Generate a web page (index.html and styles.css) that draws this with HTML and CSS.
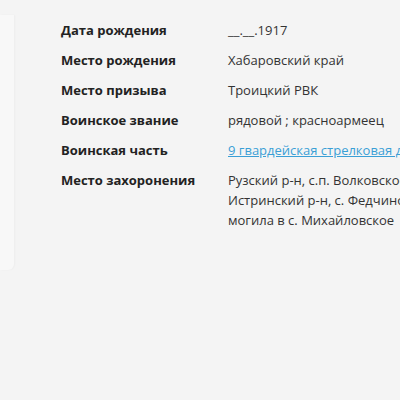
FILE: index.html
```
<!DOCTYPE html>
<html lang="ru">
<head>
<meta charset="UTF-8">
<title>Карточка</title>
<link rel="stylesheet" href="styles.css">
</head>
<body>
<div class="side"></div>
<div class="info">
  <div class="row"><div class="label">Дата рождения</div><div class="value">__.__.1917</div></div>
  <div class="row"><div class="label">Место рождения</div><div class="value">Хабаровский край</div></div>
  <div class="row"><div class="label">Место призыва</div><div class="value">Троицкий РВК</div></div>
  <div class="row"><div class="label">Воинское звание</div><div class="value">рядовой ; красноармеец</div></div>
  <div class="row"><div class="label">Воинская часть</div><div class="value"><a href="#">9 гвардейская стрелковая дивизия</a></div></div>
  <div class="row"><div class="label">Место захоронения</div><div class="value">Рузский р-н, с.п. Волковское, д. Михайловское;<br>Истринский р-н, с. Федчино, братская<br>могила в с. Михайловское</div></div>
</div>
</body>
</html>
```
FILE: styles.css
```
html, body {
margin: 0;
padding: 0;
}

body {
background: #f4f4f4;
font-family: "Open Sans", "Noto Sans", sans-serif;
font-size: 13px;
color: #333;
width: 400px;
height: 400px;
overflow: hidden;
display: flex;
align-items: flex-start;
}

.side {
flex: 0 0 14px;
height: 255px;
margin-top: 15px;
background: #f8f8f8;
border-radius: 0 0 6px 0;
box-shadow: 1px 0 2px rgba(0, 0, 0, 0.03);
}

.info {
padding: 15px 0 0 47px;
}

.row {
display: flex;
padding: 5px 0;
line-height: 20px;
}

.label {
flex: 0 0 167px;
font-weight: 700;
color: #222;
white-space: nowrap;
}

.value {
white-space: nowrap;
}

.value a {
color: #3a9fd6;
text-decoration: underline;
}
```
